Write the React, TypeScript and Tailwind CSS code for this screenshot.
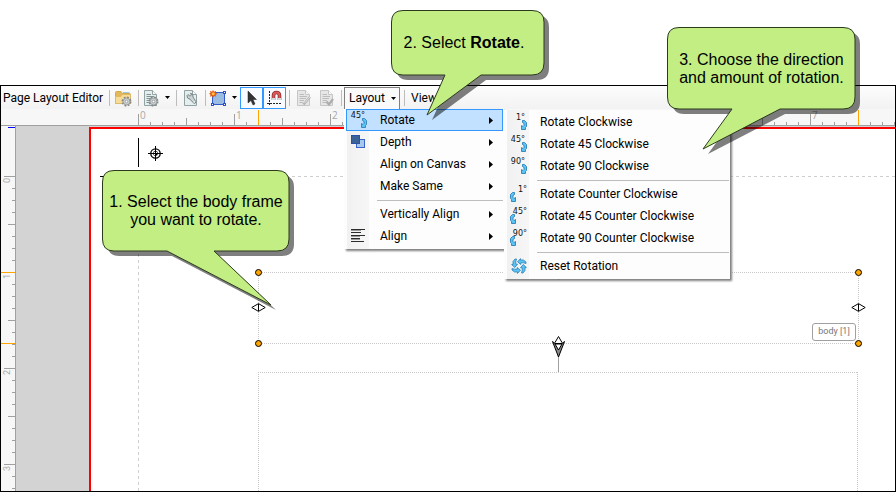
import React from "react";

const TICKS = Array.from({ length: 64 }, (_, i) => i);
const tickLength = (i: number) => (i % 8 === 0 ? 11 : i % 4 === 0 ? 7 : 3);

function HorizontalRuler() {
  return (
    <div className="relative h-[17px] w-full shrink-0 overflow-hidden border-b border-[#a0a0a0] bg-[#f7f7f7]">
      <svg className="block h-full w-full" shapeRendering="crispEdges" aria-hidden="true">
        {TICKS.map((i) => (
          <rect key={i} x={137 + i * 12} y={16 - tickLength(i)} width="1" height={tickLength(i)} fill="#a0a0a0" />
        ))}
        <rect x="257" y="1" width="1" height="16" fill="#ffa500" />
        <rect x="857" y="1" width="1" height="16" fill="#ffa500" />
        {[0, 1, 2, 7].map((n) => (
          <text key={n} x={139 + n * 96} y="10" fontSize="10" fill="#a8a8a8" fontFamily="Open Sans, sans-serif">
            {n}
          </text>
        ))}
      </svg>
    </div>
  );
}

function VerticalRuler() {
  return (
    <div className="w-[15px] shrink-0 overflow-hidden border-r border-[#a0a0a0] bg-[#f7f7f7]">
      <svg className="block h-full w-full" shapeRendering="crispEdges" aria-hidden="true">
        <rect x="7" y="1" width="8" height="1" fill="#0000ff" />
        {TICKS.map((i) => (
          <rect key={i} x={14 - tickLength(i)} y={50 + i * 12} width={tickLength(i)} height="1" fill="#a0a0a0" />
        ))}
        <rect x="0" y="146" width="15" height="1" fill="#ffa500" />
        <rect x="0" y="217" width="15" height="1" fill="#ffa500" />
        {[0, 1, 2, 3].map((n) => (
          <text
            key={n}
            transform={`translate(9 ${57 + n * 96}) rotate(-90)`}
            fontSize="9"
            fill="#a8a8a8"
            fontFamily="Roboto, sans-serif"
          >
            {n}
          </text>
        ))}
      </svg>
    </div>
  );
}

function Gear({ x, y }: { x: number; y: number }) {
  return (
    <g transform={`translate(${x} ${y})`}>
      <circle r="4" fill="none" stroke="#85898c" strokeWidth="2" strokeDasharray="1.8 1.34" />
      <circle r="3.4" fill="#cdd0d1" stroke="#8b8f92" strokeWidth="0.7" />
      <circle r="1.3" fill="#fff" stroke="#85898c" strokeWidth="0.7" />
    </g>
  );
}

function PageShape({ faded = false }: { faded?: boolean }) {
  return (
    <>
      <path
        d="M1.5 .5H9.5L13.5 4.5V15.5H1.5Z"
        fill={faded ? "#e6e6e6" : "#e4eeee"}
        stroke={faded ? "#c6c6c6" : "#91a3a3"}
      />
      <path d="M9.5 .5V4.5H13.5" fill="#fafafa" stroke={faded ? "#c6c6c6" : "#91a3a3"} />
    </>
  );
}

const icon = "block h-4 w-4 shrink-0 overflow-visible";

function FolderIcon() {
  return (
    <svg className={icon} viewBox="0 0 16 16" aria-hidden="true">
      <path d="M.5 13.5V2.5Q.5 1.5 1.5 1.5H6L7.5 3.5H14.5Q15.5 3.5 15.5 4.5V13.5Z" fill="#e3b95c" stroke="#d2a953" />
      <path d="M8 2.5H14.5" stroke="#9fcbe0" />
      <path d="M.5 13.5V6.5H6L7.5 4.5H15.5V13.5Z" fill="#f7dc97" stroke="#dfb963" />
      <Gear x={11.5} y={11.5} />
    </svg>
  );
}

function PageGearIcon() {
  return (
    <svg className={icon} viewBox="0 0 16 16" aria-hidden="true">
      <PageShape />
      <path d="M3.5 4.5H8M3.5 6.5H11M3.5 8.5H9M3.5 10.5H7M3.5 12.5H7" stroke="#839292" />
      <Gear x={10.5} y={11.5} />
    </svg>
  );
}

function WrenchIcon() {
  return (
    <svg className={icon} viewBox="0 0 16 16" aria-hidden="true">
      <PageShape />
      <path
        d="M5 4.500L7 6.200L8.500 5L7.500 3.300Q10.500 3.500 10 7L12.800 11.500Q13 13.800 10.800 13.300L7 9.200Q3.600 8.500 4 5.500Z"
        fill="#cdd4d4"
        stroke="#6f7a7a"
        strokeWidth=".9"
        strokeLinejoin="round"
      />
      <circle cx="11.300" cy="12" r=".7" fill="#fff" />
    </svg>
  );
}

function FrameIcon() {
  return (
    <svg className={icon} viewBox="0 0 16 16" aria-hidden="true">
      <rect x="2.500" y="2.500" width="12" height="12" fill="#9bbce0" stroke="#3159c9" />
      <g fill="#fff" stroke="#2a52d0">
        <rect x="13.500" y="1.500" width="2" height="2" />
        <rect x="1.500" y="13.500" width="2" height="2" />
        <rect x="13.500" y="13.500" width="2" height="2" />
      </g>
      <path d="M3 0L4.200 1.800L6.200 .8L5.600 2.800L7.500 3.800L5.600 4.700L6.200 6.800L4.200 5.900L3 7.800L2 5.900L0 6.800L.5 4.700L-1 3.800L.5 2.800L0 .8L2 1.800Z" fill="#e85b12" />
      <circle cx="3.200" cy="3.800" r="1.500" fill="#ffc34d" />
    </svg>
  );
}

function CursorIcon() {
  return (
    <svg className={icon} viewBox="0 0 16 16" aria-hidden="true">
      <path d="M4 1V13L7 10.500L9 15L11 14L9 9.500H12.500Z" fill="#333" stroke="#222" strokeWidth=".5" />
    </svg>
  );
}

function MagnetIcon() {
  return (
    <svg className={icon} viewBox="0 0 16 16" aria-hidden="true">
      <path d="M2.500 1V16M0 13.500H15" stroke="#222" strokeDasharray="2 1" />
      <path d="M6.500 10V5.500Q6.500 2.500 9.500 2.500T12.500 5.500V10" fill="none" stroke="#8f2b2d" strokeWidth="3.600" />
      <path d="M6.500 8V5.500Q6.500 2.500 9.500 2.500T12.500 5.500V8" fill="none" stroke="#dc5b5a" strokeWidth="2" />
      <path d="M5 9H8M11 9H14" stroke="#d6dadb" strokeWidth="2" />
    </svg>
  );
}

function PageEditIcon({ kind }: { kind: "pencil" | "check" }) {
  return (
    <svg className={icon} viewBox="0 0 16 16" aria-hidden="true">
      <PageShape faded />
      <path d="M3.500 4.500H8M3.500 6.500H11M3.500 8.500H10M3.500 10.500H8M3.500 12.500H7" stroke="#bcbcbc" />
      {kind === "pencil" ? (
        <>
          <path d="M7.500 14.500L14 7" stroke="#b3b3b3" strokeWidth="2.400" />
          <path d="M8.500 13L14 7" stroke="#e2e2e2" />
        </>
      ) : (
        <path d="M7.500 11.500L10 14.500L14 9" fill="none" stroke="#adadad" strokeWidth="2.200" />
      )}
    </svg>
  );
}

function Caret() {
  return (
    <svg className="block h-[3px] w-[5px] shrink-0" viewBox="0 0 5 3" aria-hidden="true">
      <path d="M0 0H5L2.500 3Z" fill="#000" />
    </svg>
  );
}

function Divider({ className = "" }: { className?: string }) {
  return <span className={`h-4 w-px shrink-0 bg-[#bdbdbd] ${className}`} />;
}

function Toolbar() {
  return (
    <header className="flex h-[23px] w-full shrink-0 items-center overflow-hidden bg-linear-to-b from-[#fdfdfd] to-[#f2f2f2]">
      <h1 className="w-[108px] shrink-0 pl-0.5 text-[12px] whitespace-nowrap">Page Layout Editor</h1>
      <Divider />
      <button aria-label="Open" className="ml-1 px-px"><FolderIcon /></button>
      <Divider className="ml-1.5" />
      <button aria-label="Page settings" className="ml-1 flex items-center gap-1.5"><PageGearIcon /><Caret /></button>
      <Divider className="ml-1.5" />
      <button aria-label="Page tools" className="ml-1.5"><WrenchIcon /></button>
      <Divider className="ml-1.5" />
      <button aria-label="New frame" className="ml-1 flex items-center gap-1.5"><FrameIcon /><Caret /></button>
      <button aria-label="Select" aria-pressed="true" className="ml-[3px] flex h-[22px] w-[23px] shrink-0 items-center justify-center border border-[#3399ff] bg-[#f8fbff]"><CursorIcon /></button>
      <button aria-label="Snap" aria-pressed="true" className="flex h-[22px] w-[23px] shrink-0 items-center justify-center border border-[#3399ff] bg-[#f8fbff]"><MagnetIcon /></button>
      <Divider className="ml-[3px]" />
      <button aria-label="Edit page" disabled className="ml-1.5"><PageEditIcon kind="pencil" /></button>
      <button aria-label="Apply page" disabled className="ml-[7px]"><PageEditIcon kind="check" /></button>
      <Divider className="ml-1.5" />
      <button aria-haspopup="menu" aria-expanded="true" className="ml-0.5 flex h-[22px] w-14 shrink-0 items-center gap-1.5 border border-b-0 border-[#808080] bg-[#fafafa] pl-1 text-[12px]">Layout<Caret /></button>
      <Divider className="ml-1" />
      <button className="ml-1.5 text-[12px]">View</button>
    </header>
  );
}

function ResizeMark({ className }: { className: string }) {
  return (
    <svg className={`absolute h-[9px] w-[15px] ${className}`} viewBox="0 0 15 9" aria-hidden="true">
      <path d="M.8 4.500L7.500 .6L14.200 4.500L7.500 8.400Z" fill="#fff" stroke="#000" />
      <path d="M7.500 1V8" stroke="#000" />
    </svg>
  );
}

function Handle({ className }: { className: string }) {
  return <span className={`absolute h-[7px] w-[7px] rounded-full border border-black bg-[#ffa500] ${className}`} />;
}

function Canvas() {
  return (
    <main className="relative min-w-0 grow overflow-hidden bg-[#d3d3d3]">
      <div className="absolute top-px right-0 bottom-0 left-[73px] border-t-2 border-l-2 border-[#ff0000] bg-white" />
      <svg className="absolute inset-0 h-full w-full" shapeRendering="crispEdges" aria-hidden="true">
        <path d="M122.500 38V400M84 50.500H900" stroke="#cfcfcf" strokeDasharray="3 3" />
        <path d="M122.500 12V41M84 50.500H92" stroke="#000" />
        <path d="M542.500 217V246" stroke="#a0a0a0" />
        <path d="M542.500 150V154" stroke="#000" />
        <g stroke="#c8c8c8" strokeDasharray="1 1">
          <path d="M242 146.500H842M242 217.500H842M242.500 146V218M842.500 146V218" />
          <path d="M242 246.500H842M242.500 246V400M841.500 246V400" />
        </g>
      </svg>
      <svg className="absolute top-5 left-[132px] h-[15px] w-[15px]" viewBox="0 0 15 15" aria-hidden="true">
        <circle cx="7.500" cy="7.500" r="4.700" fill="#fff" stroke="#000" strokeWidth="1.300" />
        <path d="M7.500 0V15M0 7.500H15" stroke="#000" />
        <circle cx="7.500" cy="7.500" r="2.400" />
        <path d="M6 6H7V7H6ZM8 6H9V7H8ZM6 8H7V9H6Z" fill="#fff" />
      </svg>
      <Handle className="top-[143px] left-[239px]" />
      <Handle className="top-[143px] left-[839px]" />
      <Handle className="top-[214px] left-[239px]" />
      <Handle className="top-[214px] left-[839px]" />
      <ResizeMark className="top-[177px] left-[235px]" />
      <ResizeMark className="top-[177px] left-[835px]" />
      <svg className="absolute top-[210px] left-[536px] h-[22px] w-[13px]" viewBox="0 0 13 22" aria-hidden="true">
        <path d="M6.500 .5L3 6.500L6.500 13.500L10 6.500Z" fill="#fff" stroke="#000" />
        <path d="M.5 5.500L6.500 21L12.500 5.500L10 7.500H3Z" fill="#888" stroke="#000" />
        <path d="M3 8L6.500 14L10 8Z" fill="#fff" stroke="#000" />
      </svg>
      <span className="absolute top-[197px] left-[796px] flex h-[18px] w-[44px] items-center justify-center rounded-[3px] border border-[#a0a0a0] bg-white text-[9px] whitespace-nowrap text-[#777]">
        body [1]
      </span>
    </main>
  );
}

function TurnIcon({ label, reverse = false }: { label: string; reverse?: boolean }) {
  return (
    <svg className={icon} viewBox="0 0 16 16" aria-hidden="true">
      <text x={reverse ? 16 : 14} y="6" textAnchor="end" fontSize="8" fill="#111" fontFamily="DejaVu Sans, sans-serif">
        {label}
      </text>
      <g transform={reverse ? "translate(15 0) scale(-1 1)" : undefined}>
        <path
          d="M11.500 6.500H13.500L15.500 8.500V12.500L14.500 13.500V15.500H10.500V11.500L12 12.500L13 11.500V9.500L11.500 8.500Z"
          fill="#5cc4f2"
          stroke="#2b7fb8"
          strokeWidth=".9"
        />
      </g>
    </svg>
  );
}

function DepthIcon() {
  return (
    <svg className={icon} viewBox="0 0 16 16" aria-hidden="true">
      <rect x="5.500" y="5.500" width="8" height="8" fill="#a8c8ea" stroke="#3b63cd" />
      <rect x=".5" y="1.500" width="8" height="8" fill="#3b6398" stroke="#2b50a4" />
    </svg>
  );
}

function AlignIcon() {
  return (
    <svg className={icon} viewBox="0 0 16 16" shapeRendering="crispEdges" aria-hidden="true">
      <path d="M0 1.500H14M0 4.500H10M0 7.500H14M0 10.500H9M0 13.500H13" stroke="#2c2c2c" />
      <path d="M0 2.500H10M0 8.500H9M0 11.500H9" stroke="#9a9a9a" />
    </svg>
  );
}

function ResetIcon() {
  return (
    <svg className={icon} viewBox="0 0 16 16" aria-hidden="true">
      {[0, 90, 180, 270].map((a) => (
        <path
          key={a}
          transform={`rotate(${a} 8 8)`}
          d="M6.500 3.800L9.500 .6V2H12.500L15 4V5.500L12.500 4.800H9.800V6.500Z"
          fill="#5cc4f2"
          stroke="#2b7fb8"
          strokeWidth=".8"
        />
      ))}
    </svg>
  );
}

type Entry = { label: string; glyph?: React.ReactNode; active?: boolean } | null;

function Menu({ entries, className, nested }: { entries: Entry[]; className: string; nested?: boolean }) {
  return (
    <ul
      role="menu"
      className={`absolute bg-[#fdfdfd] bg-[linear-gradient(90deg,#fdfdfd_3px,#f1f1f1_3px,#f6f6f6_25px,#fdfdfd_25px)] pr-px pb-0.5 pl-0.5 text-[12px] shadow-[2px_2px_2px_#808080] ${className}`}
    >
      {entries.map((e, i) =>
        e === null ? (
          <li key={i} role="separator" className="flex h-1.5 items-center pl-[31px]">
            <span className="h-px w-full bg-[#bdbdbd]" />
          </li>
        ) : (
          <li key={i} role="none">
            <button
              role="menuitem"
              className={`flex h-[22px] w-full items-center border pl-1 text-left whitespace-nowrap ${e.active ? "border-[#3399ff] bg-[#c2e0ff]" : "border-transparent"}`}
            >
              <span className="mr-[13px] h-4 w-4 shrink-0">{e.glyph}</span>
              <span className="grow">{e.label}</span>
              {nested && (
                <svg className="mr-[9px] h-[7px] w-1" viewBox="0 0 4 7" aria-hidden="true">
                  <path d="M0 0L4 3.500L0 7Z" />
                </svg>
              )}
            </button>
          </li>
        ),
      )}
    </ul>
  );
}

const LAYOUT_MENU: Entry[] = [
  { label: "Rotate", glyph: <TurnIcon label="45°" />, active: true },
  { label: "Depth", glyph: <DepthIcon /> },
  { label: "Align on Canvas" },
  { label: "Make Same" },
  null,
  { label: "Vertically Align" },
  { label: "Align", glyph: <AlignIcon /> },
];

const ROTATE_MENU: Entry[] = [
  { label: "Rotate Clockwise", glyph: <TurnIcon label="1°" /> },
  { label: "Rotate 45 Clockwise", glyph: <TurnIcon label="45°" /> },
  { label: "Rotate 90 Clockwise", glyph: <TurnIcon label="90°" /> },
  null,
  { label: "Rotate Counter Clockwise", glyph: <TurnIcon label="1°" reverse /> },
  { label: "Rotate 45 Counter Clockwise", glyph: <TurnIcon label="45°" reverse /> },
  { label: "Rotate 90 Counter Clockwise", glyph: <TurnIcon label="90°" reverse /> },
  null,
  { label: "Reset Rotation", glyph: <ResetIcon /> },
];

function Callout({ className, shape, children }: { className: string; shape: string; children: React.ReactNode }) {
  return (
    <aside
      className={`absolute flex items-center justify-center text-center font-['Liberation_Sans',Arial,sans-serif] text-[16px] leading-[18px] whitespace-nowrap ${className}`}
    >
      <svg className="absolute inset-0 h-full w-full overflow-visible" aria-hidden="true">
        <path d={shape} transform="translate(5 5)" fill="#000" fillOpacity=".5" />
        <path d={shape} fill="#c2ee84" stroke="#2c3a1c" />
      </svg>
      <p className="relative">{children}</p>
    </aside>
  );
}

export default function App() {
  return (
    <div className="relative flex h-screen w-full flex-col overflow-hidden bg-white pt-[85px] font-['Roboto','Open_Sans',sans-serif] text-black">
      <section className="flex min-h-0 grow flex-col border border-black">
        <Toolbar />
        <HorizontalRuler />
        <div className="flex min-h-0 grow">
          <VerticalRuler />
          <Canvas />
        </div>
      </section>
      <Menu entries={LAYOUT_MENU} nested className="top-[109px] left-[344px] w-[160px]" />
      <Menu entries={ROTATE_MENU} className="top-[110px] left-[504px] w-[226px] pt-px" />
      <Callout
        className="top-[170px] left-[102px] h-[82px] w-[188px]"
        shape="M12 .5H175Q187 .5 187 12V69Q187 81 175 81H112L169 135L65 81H12Q.5 81 .5 69V12Q.5 .5 12 .5Z"
      >
        1. Select the body frame<br />you want to rotate.
      </Callout>
      <Callout
        className="top-[10px] left-[391px] h-[66px] w-[154px] pr-2"
        shape="M12 .5H141Q153 .5 153 12V53Q153 65 141 65H90L36 105L54 65H12Q.5 65 .5 53V12Q.5 .5 12 .5Z"
      >
        2. Select <b>Rotate</b>.
      </Callout>
      <Callout
        className="top-[27px] left-[667px] h-[83px] w-[189px]"
        shape="M12 .5H176Q188 .5 188 12V70Q188 82 176 82H113L36 122L65 82H12Q.5 82 .5 70V12Q.5 .5 12 .5Z"
      >
        3. Choose the direction<br />and amount of rotation.
      </Callout>
    </div>
  );
}
